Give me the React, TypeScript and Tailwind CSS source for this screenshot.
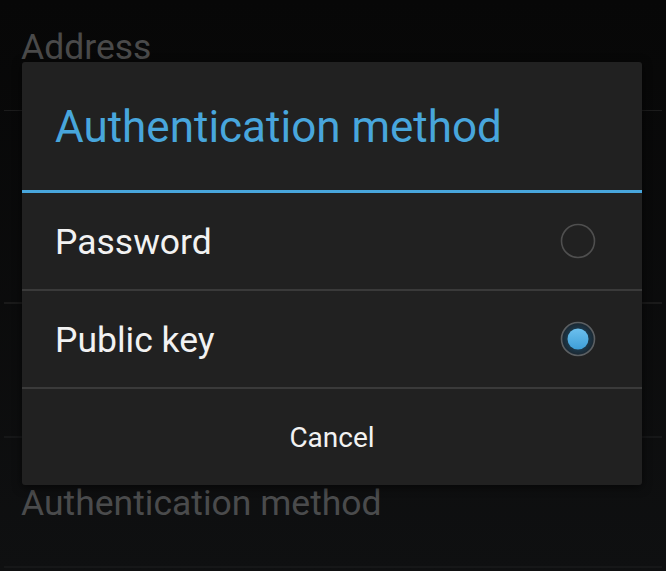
import React from 'react';

const font = { fontFamily: 'Roboto, "Noto Sans", sans-serif' };

const Radio: React.FC<{ checked?: boolean }> = ({ checked }) => (
  <svg width="36" height="36" viewBox="0 0 36 36" className="shrink-0">
    {checked ? (
      <>
        <defs>
          <radialGradient id="glow" cx="50%" cy="50%" r="50%">
            <stop offset="60%" stopColor="#1d3a4c" />
            <stop offset="100%" stopColor="#1a2630" />
          </radialGradient>
          <linearGradient id="dot" x1="0" y1="0" x2="0" y2="1">
            <stop offset="0%" stopColor="#6cc0ee" />
            <stop offset="100%" stopColor="#3e9fd8" />
          </linearGradient>
        </defs>
        <circle cx="18" cy="18" r="16.5" fill="url(#glow)" stroke="#5b5f62" strokeWidth="1.6" />
        <circle cx="18" cy="18" r="10.5" fill="url(#dot)" />
      </>
    ) : (
      <circle cx="18" cy="18" r="16.5" fill="none" stroke="#4f4f4f" strokeWidth="1.6" />
    )}
  </svg>
);

export default function App() {
  const options = [
    { label: 'Password', checked: false },
    { label: 'Public key', checked: true },
  ];

  return (
    <div
      className="relative w-[666px] h-[571px] overflow-hidden bg-gradient-to-b from-[#070707] to-[#0f1011]"
      style={font}
    >
      {/* Preference screen behind the dim */}
      <div className="flex flex-col">
        <div className="pt-[30px] pl-[21px] text-[35.5px] leading-[35px] text-[#4a4a4a]">Address</div>
        <div className="mt-[45px] mx-[4px] h-px bg-[#1c1c1c]" />
        <div className="mt-[191px] mx-[4px] h-[2px] bg-[#1a1a1a]" />
        <div className="mt-[132px] mx-[4px] h-[2px] bg-[#161718]" />
        <div className="mt-[48px] pl-[21px] text-[35.5px] leading-[35px] text-[#4a4b4c]">Authentication method</div>
        <div className="mt-[45px] mx-[4px] h-[2px] bg-[#161718]" />
      </div>

      {/* Dialog */}
      <div className="absolute left-[22px] top-[62px] w-[620px] h-[423px] rounded-[3px] bg-[#212121] shadow-[0_2px_10px_rgba(0,0,0,0.6)] flex flex-col text-[#f2f2f2]">
        <div className="h-[128px] pl-[33px] pt-[43px] text-[44px] leading-[44px] text-[#48a6dc]">
          Authentication method
        </div>
        <div className="h-[3px] bg-[#48a6dc]" />
        {options.map((o) => (
          <React.Fragment key={o.label}>
            <div className="h-[96px] flex items-center justify-between pl-[33px] pr-[46px]">
              <span className="pt-[2px] text-[35.5px] leading-[35px]">{o.label}</span>
              <Radio checked={o.checked} />
            </div>
            <div className="h-[2px] bg-[#3a3a3a]" />
          </React.Fragment>
        ))}
        <div className="flex-1 flex items-center justify-center">
          <span className="pt-[2px] text-[28px] leading-[28px]">Cancel</span>
        </div>
      </div>
    </div>
  );
}
